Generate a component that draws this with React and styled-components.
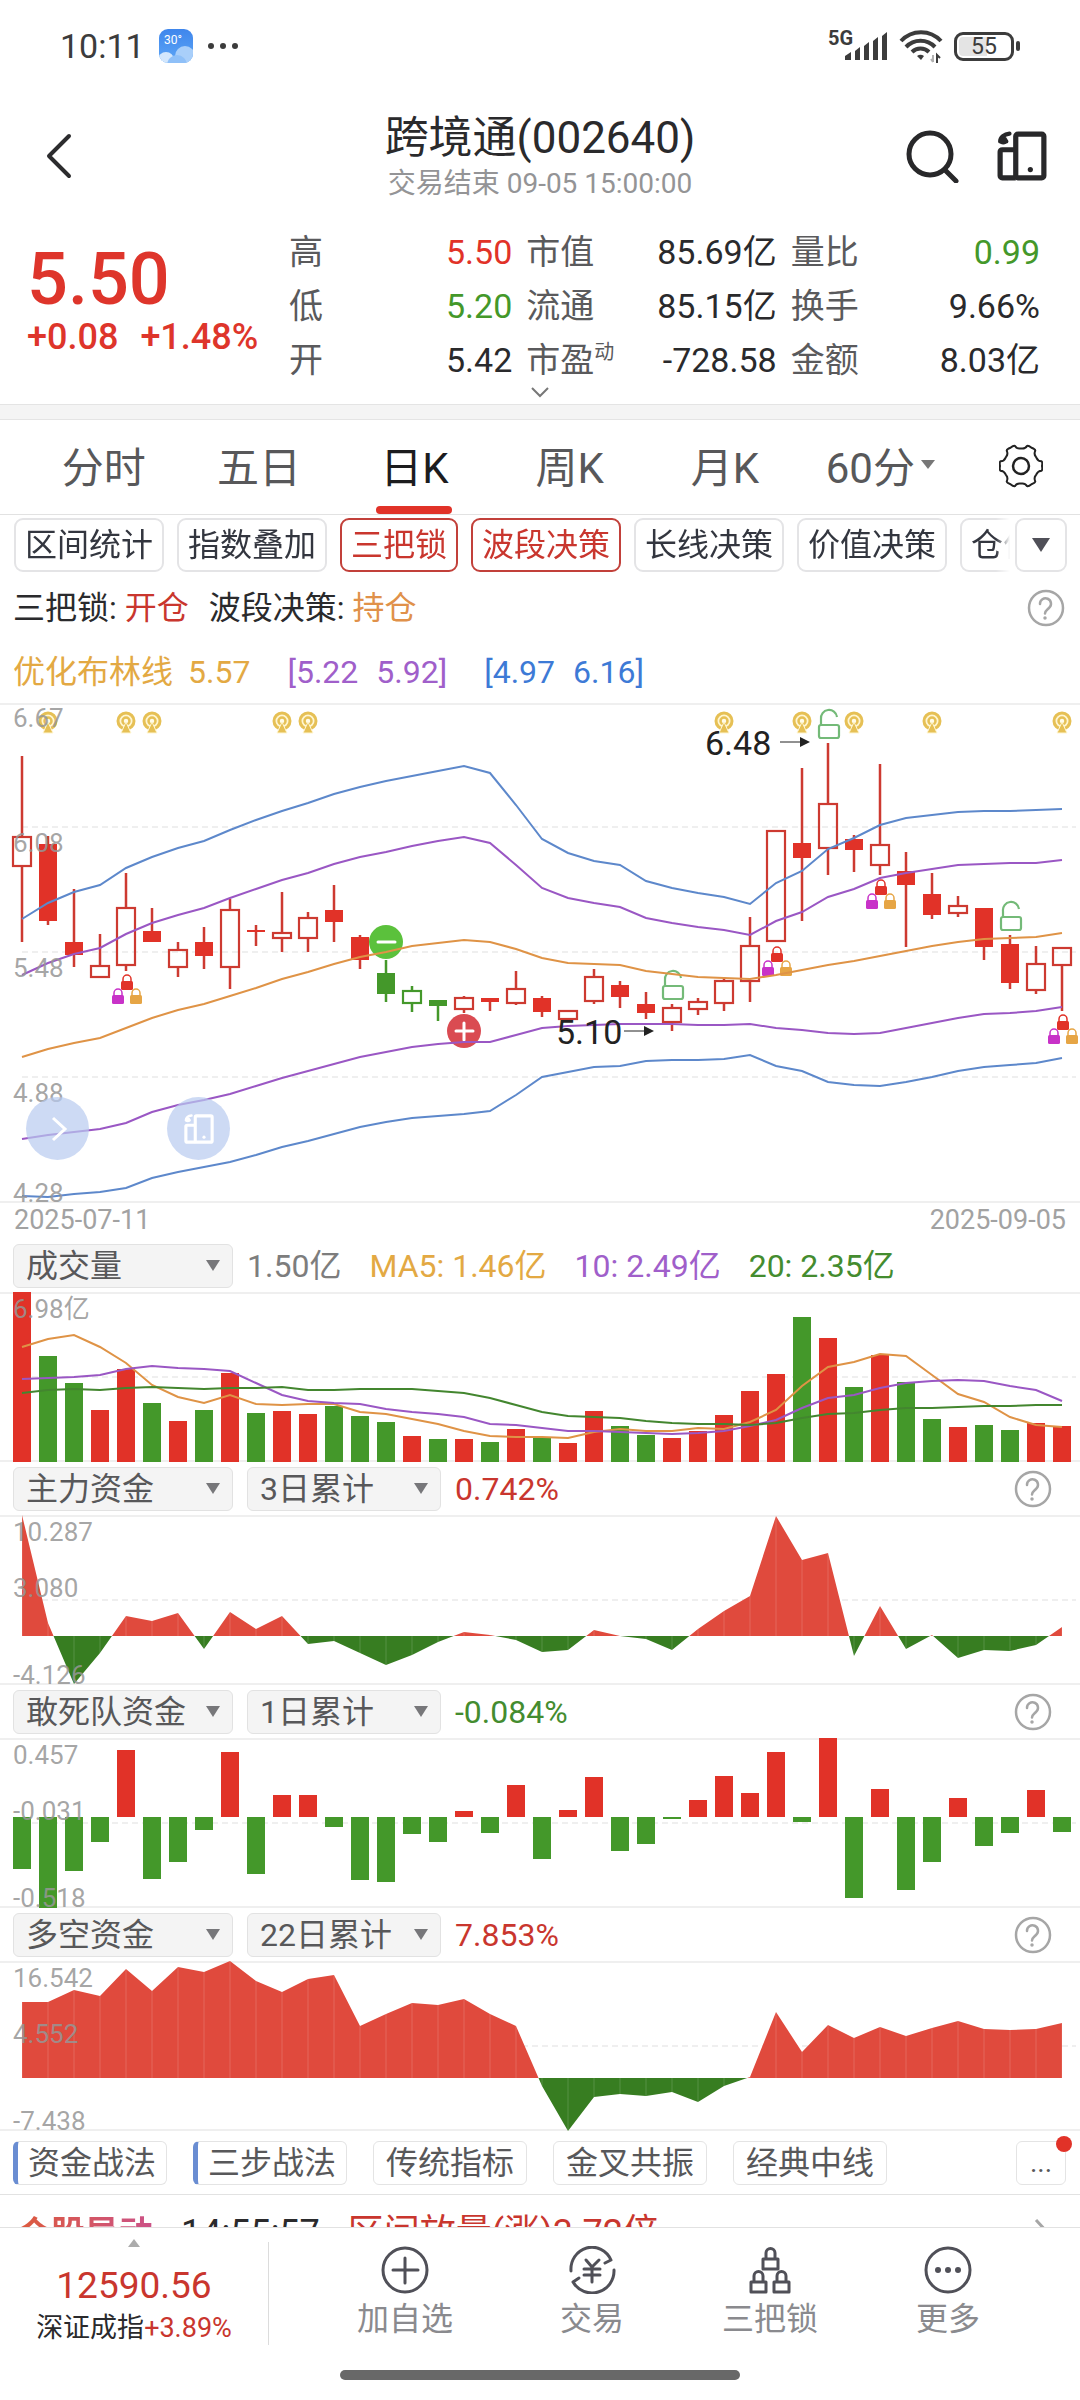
import React, { useState } from "react";
import styled, { createGlobalStyle } from "styled-components";

const RED = "#e13228";
const GREEN = "#44982a";
const BLUE_LINE = "#5d88cb";
const PURPLE_LINE = "#9a57c4";
const ORANGE_LINE = "#df9346";

const STEP = 26;
const px = (i) => 22 + i * STEP;

// [kind, high, top, bottom, low], f = filled body, h = hollow body, F / H = the same in green
const candles = [
  ["h", 53, 133, 164, 239], ["f", 133, 141, 218, 222], ["f", 186, 239, 252, 264], ["h", 231, 262, 275, 275],
  ["h", 170, 204, 263, 268], ["f", 205, 228, 239, 239], ["h", 239, 246, 265, 274], ["f", 224, 239, 253, 266],
  ["h", 196, 206, 265, 286], ["f", 222, 227, 229, 243], ["h", 189, 229, 236, 249], ["h", 209, 214, 236, 249],
  ["f", 182, 207, 219, 239], ["f", 232, 234, 257, 266], ["F", 257, 270, 291, 299], ["H", 283, 287, 301, 309],
  ["F", 297, 297, 303, 318], ["h", 293, 294, 307, 310], ["f", 295, 295, 299, 308], ["h", 268, 285, 301, 302],
  ["f", 293, 295, 309, 314], ["h", 307, 307, 317, 317], ["h", 266, 273, 299, 301], ["f", 278, 282, 294, 305],
  ["f", 289, 301, 310, 316], ["h", 301, 304, 320, 328], ["h", 295, 298, 307, 312], ["h", 274, 277, 301, 308],
  ["h", 214, 242, 279, 299], ["h", 127, 127, 239, 239], ["f", 65, 140, 155, 218], ["h", 40, 100, 146, 172],
  ["f", 132, 136, 147, 169], ["h", 61, 141, 163, 172], ["f", 149, 168, 182, 244], ["f", 170, 191, 212, 216],
  ["h", 193, 202, 211, 214], ["f", 205, 205, 244, 257], ["f", 232, 241, 280, 286], ["h", 243, 260, 288, 291],
  ["h", 244, 244, 263, 308],
];

const bands = [
  [BLUE_LINE, [216, 200, 189, 182, 165, 154, 145, 138, 127, 117, 108, 100, 91, 84, 78, 73, 68, 63, 70, 102, 136, 150, 158, 162, 178, 185, 190, 194, 201, 180, 168, 146, 135, 122, 115, 112, 109, 108, 108, 107, 106]],
  [PURPLE_LINE, [272, 260, 251, 245, 231, 220, 212, 205, 195, 186, 177, 170, 161, 154, 149, 143, 138, 134, 140, 162, 185, 195, 200, 204, 215, 220, 224, 227, 232, 218, 209, 194, 186, 175, 170, 166, 162, 161, 160, 160, 157]],
  [ORANGE_LINE, [354, 346, 340, 335, 325, 315, 307, 301, 293, 285, 276, 269, 261, 254, 249, 243, 240, 237, 239, 246, 255, 260, 261, 262, 268, 271, 274, 275, 276, 272, 267, 262, 258, 253, 248, 243, 239, 236, 235, 234, 230]],
  [PURPLE_LINE, [436, 432, 429, 426, 420, 409, 402, 397, 391, 383, 375, 368, 361, 354, 349, 344, 341, 339, 339, 332, 325, 323, 322, 321, 321, 321, 322, 322, 321, 325, 327, 330, 331, 330, 325, 320, 315, 311, 310, 308, 304]],
  [BLUE_LINE, [493, 494, 491, 489, 485, 475, 469, 464, 459, 452, 444, 438, 431, 424, 419, 415, 413, 411, 408, 392, 374, 369, 364, 363, 358, 357, 357, 356, 352, 363, 368, 379, 382, 383, 379, 374, 368, 364, 362, 360, 355]],
];

const volume = [170, 106, 79, 52, 93, 59, 41, 52, 89, 49, 51, 48, 56, 46, 40, 26, 23, 23, 20, 33, 24, 19, 51, 36, 27, 24, 31, 47, 71, 88, 145, 124, 75, 107, 80, 43, 35, 37, 32, 39, 36];
const volumeColor = "RGGRRGRGRGRRGGGRGRGRGRRGGRRRRRGRGRGGRGGRR";
const volumeLines = [
  [ORANGE_LINE, [55, 47, 43, 55, 71, 93, 105, 111, 103, 112, 113, 112, 112, 120, 122, 127, 132, 139, 144, 145, 145, 146, 140, 137, 139, 139, 136, 137, 130, 118, 94, 75, 70, 62, 64, 83, 102, 110, 125, 133, 135]],
  [PURPLE_LINE, [87, 86, 85, 83, 77, 74, 76, 77, 79, 91, 103, 109, 111, 112, 117, 120, 122, 125, 132, 133, 136, 139, 139, 140, 141, 142, 141, 139, 134, 128, 116, 106, 103, 96, 91, 89, 88, 89, 94, 98, 109]],
  ["#43862f", [101, 98, 97, 98, 96, 95, 96, 97, 96, 96, 95, 98, 98, 97, 97, 97, 99, 101, 106, 113, 120, 124, 125, 126, 129, 131, 132, 132, 133, 131, 126, 122, 121, 118, 116, 116, 115, 114, 114, 113, 113]],
];

const mainFund = [121, 13, -48, -17, 20, 15, 23, -13, 24, 7, 20, -8, -5, -17, -29, -19, -6, 4, 1, -4, -16, -14, 6, 0, -3, -14, 7, 25, 40, 120, 76, 83, -20, 30, -13, 1, -22, -14, -15, -9, 9];
const dareFund = [-52, -91, -54, -25, 67, -62, -45, -13, 65, -57, 22, 22, -10, -63, -65, -17, -25, 6, -16, 32, -42, 7, 40, -34, -27, -2, 17, 41, 24, 65, -5, 79, -81, 28, -73, -45, 19, -29, -16, 27, -15];
const bullBear = [76, 76, 88, 82, 109, 87, 111, 106, 117, 97, 86, 99, 103, 52, 64, 75, 73, 79, 64, 52, -8, -53, -19, -16, -18, -14, -24, -8, 1, 66, 26, 53, 40, 51, 42, 50, 57, 49, 48, 49, 55];

const toPoints = (values) => values.map((v, i) => `${px(i)},${v}`).join(" ");

function StatusBar() {
  return (
    <StatusRow>
      <StatusSide>
        <Clock>10:11</Clock>
        <svg width="34" height="34" viewBox="0 0 34 34">
          <defs>
            <linearGradient id="sky" x1="0" y1="0" x2="0" y2="1">
              <stop offset="0" stopColor="#3f86ec" />
              <stop offset="1" stopColor="#5da6f6" />
            </linearGradient>
            <clipPath id="tile">
              <rect width="34" height="34" rx="9" />
            </clipPath>
          </defs>
          <g clipPath="url(#tile)">
            <rect width="34" height="34" fill="url(#sky)" />
            <circle cx="26" cy="27" r="10" fill="#a9cffa" />
            <circle cx="7" cy="31" r="8" fill="#d3e7fd" />
            <circle cx="18" cy="36" r="10" fill="#8fc0f8" />
          </g>
          <text x="5" y="15" fontSize="12" fill="#fff">30°</text>
        </svg>
        <svg width="32" height="8" viewBox="0 0 32 8" fill="#3c3c3c">
          <circle cx="4" cy="4" r="3" />
          <circle cx="16" cy="4" r="3" />
          <circle cx="28" cy="4" r="3" />
        </svg>
      </StatusSide>
      <StatusSide $tight>
        <SignalIcon width="60" height="32" viewBox="-2 0 60 32" fill="#3c3c3c">
          <text x="-2" y="15" fontSize="20" fontWeight="700">5G</text>
          <path d="M15 26l6-4v8h-6zM25 21l5-4v13h-5zM34 16l5-4v18h-5zM43 11l5-4v23h-5zM52 6l5-4v28h-5z" />
        </SignalIcon>
        <svg width="44" height="34" viewBox="0 0 44 34" fill="none" stroke="#3c3c3c" strokeWidth="4">
          <path d="M2 12A27 27 0 0 1 42 12" />
          <path d="M7 18A20 20 0 0 1 36 18" />
          <path d="M13 23A12 12 0 0 1 30 23" />
          <path d="M18 27a6 6 0 0 1 7 0l-3 4z" fill="#3c3c3c" stroke="none" />
          <path d="M34 26v7M32 30l2 3" stroke="#b0b0b0" strokeWidth="2" />
          <path d="M38 34v-8l3 3" strokeWidth="2" />
        </svg>
        <Battery>
          <BatteryBody>55</BatteryBody>
          <BatteryNub />
        </Battery>
      </StatusSide>
    </StatusRow>
  );
}

function TransferIcon({ size, color, strokeWidth }) {
  return (
    <svg width={size} height={size} viewBox="0 0 48 48" fill="none" stroke={color} strokeWidth={strokeWidth} strokeLinejoin="round">
      <rect x="18" y="3" width="27" height="42" rx="2" />
      <path d="M18 18H5a2 2 0 0 0-2 2v23a2 2 0 0 0 2 2h13" />
      <path d="M12 2.5C7 3 3 6 3 10h6" strokeWidth={strokeWidth - 1} strokeLinecap="round" />
      <circle cx="6" cy="9" r="4" fill={color} stroke="none" />
      <circle cx="32" cy="37" r="2.5" fill={color} stroke="none" />
    </svg>
  );
}

function Header() {
  return (
    <HeaderBar>
      <BackButton aria-label="返回">
        <svg width="28" height="48" viewBox="0 0 28 48" fill="none" stroke="#2c2c2e" strokeWidth="4" strokeLinecap="round" strokeLinejoin="round">
          <path d="M24 4L4 24l20 20" />
        </svg>
      </BackButton>
      <TitleBlock>
        <Title>跨境通(002640)</Title>
        <SubTitle>交易结束 09-05 15:00:00</SubTitle>
      </TitleBlock>
      <HeaderActions>
        <IconButton aria-label="搜索">
          <svg width="54" height="54" viewBox="0 0 54 54" fill="none" stroke="#28282a" strokeWidth="5" strokeLinecap="round">
            <circle cx="24" cy="25" r="21" />
            <path d="M39 41l11 11" />
          </svg>
        </IconButton>
        <IconButton aria-label="切换">
          <TransferIcon size={50} color="#28282a" strokeWidth={5} />
        </IconButton>
      </HeaderActions>
    </HeaderBar>
  );
}

const stats = [
  ["高", "5.50", RED],
  ["市值", "85.69亿"],
  ["量比", "0.99", GREEN],
  ["低", "5.20", GREEN],
  ["流通", "85.15亿"],
  ["换手", "9.66%"],
  ["开", "5.42"],
  ["市盈", "-728.58", null, "动"],
  ["金额", "8.03亿"],
];

function Quote() {
  return (
    <>
      <QuoteRow>
        <PriceBlock>
          <Price>5.50</Price>
          <Change>
            <span>+0.08</span>
            <span>+1.48%</span>
          </Change>
        </PriceBlock>
        <StatGrid>
          {stats.map(([label, value, color, sup]) => (
            <Stat key={label}>
              <StatLabel>
                {label}
                {sup && <Sup>{sup}</Sup>}
              </StatLabel>
              <StatValue $color={color}>{value}</StatValue>
            </Stat>
          ))}
        </StatGrid>
      </QuoteRow>
      <ExpandButton aria-label="展开">
        <svg width="18" height="11" viewBox="0 0 18 11" fill="none" stroke="#777" strokeWidth="2">
          <path d="M1 1l8 8 8-8" />
        </svg>
      </ExpandButton>
    </>
  );
}

const gear = (() => {
  const at = (r, deg) => {
    const a = (deg * Math.PI) / 180;
    return `${(22 + r * Math.cos(a)).toFixed(1)} ${(22 + r * Math.sin(a)).toFixed(1)}`;
  };
  let d = `M${at(21, -13)}`;
  for (let t = 0; t < 360; t += 60) {
    d += `Q${at(22, t - 10)} ${at(21, t)}`;
    d += `Q${at(22, t + 10)} ${at(21, t + 13)}`;
    d += `C${at(17, t + 17)} ${at(17.5, t + 24)} ${at(17.5, t + 30)}`;
    d += `C${at(17.5, t + 36)} ${at(17, t + 43)} ${at(21, t + 47)}`;
  }
  return d + "Z";
})();

function Tabs() {
  const [active, setActive] = useState("日K");
  return (
    <TabRow role="tablist">
      {["分时", "五日", "日K", "周K", "月K", "60分"].map((name) => (
        <Tab key={name} role="tab" aria-selected={active === name} $active={active === name} onClick={() => setActive(name)}>
          {name}
          {name === "60分" && <Caret $size={7} />}
        </Tab>
      ))}
      <GearButton aria-label="设置">
        <svg width="44" height="44" viewBox="0 0 44 44" fill="none" stroke="#222" strokeWidth="2" strokeLinejoin="round">
          <path d={gear} />
          <circle cx="22" cy="22" r="8" strokeWidth="2.5" />
        </svg>
      </GearButton>
    </TabRow>
  );
}

function Help() {
  return (
    <IconButton aria-label="帮助">
      <svg width="38" height="38" viewBox="0 0 38 38" fill="none" stroke="#a6a6a6" strokeWidth="2.5" strokeLinecap="round">
        <circle cx="19" cy="19" r="17" />
        <path d="M13 15a5.5 5.5 0 1 1 9 4c-2 2-4 3-4 5.5" />
        <circle cx="18" cy="29" r="1" fill="#a6a6a6" strokeWidth="1.5" />
      </svg>
    </IconButton>
  );
}

function Tools() {
  return (
    <ToolRow>
      <ToolScroll>
        <Chip>区间统计</Chip>
        <Chip>指数叠加</Chip>
        <Chip $on>三把锁</Chip>
        <Chip $on>波段决策</Chip>
        <Chip>长线决策</Chip>
        <Chip>价值决策</Chip>
        <Chip>仓位管理</Chip>
      </ToolScroll>
      <MoreTools aria-label="更多指标">
        <Caret $size={9} $dark />
      </MoreTools>
    </ToolRow>
  );
}

function Grid({ lines, bottom }) {
  return (
    <g stroke="#efefef" strokeWidth="2">
      {lines.map((y) => (
        <path key={y} d={`M22 ${y}H1076`} strokeDasharray="6 4" />
      ))}
      <path d={`M0 1H1080M0 ${bottom - 1}H1080`} />
    </g>
  );
}

function AxisLabels({ items }) {
  return items.map(([y, label]) => (
    <text key={y} x="13" y={y} fontSize="26" fill="rgba(150,150,150,0.86)">
      {label}
    </text>
  ));
}

function Lock({ x, y, color }) {
  return (
    <g transform={`translate(${x} ${y})`}>
      <path d="M-4 9V5a4 4 0 0 1 8 0v4" fill="none" stroke={color} strokeWidth="1.5" />
      <rect x="-6" y="7" width="12" height="9" rx="1.5" fill={color} />
    </g>
  );
}

function TripleLock({ i, y }) {
  return (
    <>
      <Lock x={px(i) + 1} y={y} color={RED} />
      <Lock x={px(i) - 8} y={y + 14} color="#c832c8" />
      <Lock x={px(i) + 10} y={y + 14} color="#e6a545" />
    </>
  );
}

function OpenLock({ i, y }) {
  return (
    <g transform={`translate(${px(i)} ${y})`} fill="none" stroke="#74ba78" strokeWidth="2.2">
      <rect x="-9" y="15" width="20" height="13" rx="2" />
      <path d="M-7 15V9a8 8 0 0 1 16-2" />
    </g>
  );
}

function Beacon({ i }) {
  return (
    <g transform={`translate(${px(i)} 18)`}>
      <circle r="8" fill="#fff6d2" stroke="#e6c055" strokeWidth="3" />
      <circle r="3.5" fill="#fffbe8" stroke="#e6c055" strokeWidth="2.5" />
      <path d="M0 1l5 11h-10z" fill="#e6c055" stroke="#fff6d2" />
    </g>
  );
}

function Arrow({ x, y }) {
  return (
    <g transform={`translate(${x} ${y})`}>
      <path d="M0 0H22" stroke="#222" />
      <path d="M20-5l10 5-10 5z" fill="#222" />
    </g>
  );
}

function Candle({ i, data: [kind, high, top, bottom, low] }) {
  const color = kind === "F" || kind === "H" ? GREEN : "#cd3a31";
  const hollow = kind.toLowerCase() === "h";
  return (
    <>
      <path d={`M${px(i)} ${high}V${top}M${px(i)} ${bottom}V${low}`} stroke={color} strokeWidth="2.5" />
      {hollow ? (
        <rect x={px(i) - 9} y={top + 1} width="18" height={bottom - top - 2} fill="none" stroke={color} strokeWidth="2.2" />
      ) : (
        <rect x={px(i) - 9} y={top} width="18" height={bottom - top} fill={kind === "F" ? GREEN : RED} />
      )}
    </>
  );
}

function PriceChart() {
  return (
    <ChartFrame>
      <Plot viewBox="0 0 1080 500" role="img" aria-label="日K线">
        <Grid lines={[124, 249, 374]} bottom={500} />
        {candles.map((c, i) => (
          <Candle key={i} i={i} data={c} />
        ))}
        <circle cx={px(14)} cy="239" r="17" fill="#5bc13c" />
        <path d={`M${px(14) - 8} 239h17`} stroke="#fff" strokeWidth="3" strokeLinecap="round" />
        <circle cx={px(17)} cy="328" r="17" fill="#da4b52" />
        <path d={`M${px(17) - 8} 328h17M${px(17)} 320v17`} stroke="#fff" strokeWidth="3" strokeLinecap="round" />
        {[1, 4, 5, 10, 11, 27, 30, 32, 35, 40].map((i) => (
          <Beacon key={i} i={i} />
        ))}
        <TripleLock i={4} y={271} />
        <TripleLock i={29} y={243} />
        <TripleLock i={33} y={176} />
        <TripleLock i={40} y={311} />
        <OpenLock i={31} y={7} />
        <OpenLock i={25} y={268} />
        <OpenLock i={38} y={199} />
        {bands.map(([color, values], i) => (
          <polyline key={i} points={toPoints(values)} fill="none" stroke={color} strokeWidth="2" />
        ))}
        <AxisLabels items={[[24, "6.67"], [149, "6.08"], [274, "5.48"], [399, "4.88"], [499, "4.28"]]} />
        <text x="705" y="52" fontSize="34" fill="#222">6.48</text>
        <Arrow x={780} y={39} />
        <text x="556" y="341" fontSize="34" fill="#222">5.10</text>
        <Arrow x={624} y={328} />
      </Plot>
      <FloatButton $left={26} aria-label="展开工具">
        <svg width="30" height="30" viewBox="0 0 30 30" fill="none" stroke="#fff" strokeWidth="3">
          <path d="M10 4l12 11-12 11" />
        </svg>
      </FloatButton>
      <FloatButton $left={167} aria-label="切换账户">
        <TransferIcon size={30} color="#fff" strokeWidth={5} />
      </FloatButton>
    </ChartFrame>
  );
}

function VolumeChart() {
  return (
    <Plot viewBox="0 0 1080 170" role="img" aria-label="成交量">
      <Grid lines={[85]} bottom={170} />
      {volume.map((h, i) => (
        <rect key={i} x={px(i) - 9} y={170 - h} width="18" height={h} fill={volumeColor[i] === "R" ? RED : GREEN} />
      ))}
      {volumeLines.map(([color, values]) => (
        <polyline key={color} points={toPoints(values)} fill="none" stroke={color} strokeWidth="2" />
      ))}
      <AxisLabels items={[[26, "6.98亿"]]} />
    </Plot>
  );
}

function BarChart({ values, zero, labels, name }) {
  return (
    <Plot viewBox="0 0 1080 170" role="img" aria-label={name}>
      <Grid lines={[85]} bottom={170} />
      {values.map((v, i) => (
        <rect key={i} x={px(i) - 9} y={v > 0 ? zero - v : zero} width="18" height={Math.abs(v)} fill={v > 0 ? RED : GREEN} />
      ))}
      <AxisLabels items={labels} />
    </Plot>
  );
}

function AreaChart({ id, values, zero, labels, name }) {
  const area = `${px(0)},${zero} ${toPoints(values.map((v) => zero - v))} ${px(40)},${zero}`;
  return (
    <Plot viewBox="0 0 1080 170" role="img" aria-label={name}>
      <defs>
        <clipPath id={`${id}-up`}>
          <rect width="1080" height={zero} />
        </clipPath>
        <clipPath id={`${id}-down`}>
          <rect y={zero} width="1080" height={170 - zero} />
        </clipPath>
      </defs>
      <Grid lines={[85]} bottom={170} />
      <polygon points={area} fill="#e04a3d" clipPath={`url(#${id}-up)`} />
      <polygon points={area} fill="#377d21" clipPath={`url(#${id}-down)`} />
      {values.map((v, i) => (
        <path key={i} d={`M${px(i)} ${zero}V${zero - v}`} stroke="rgba(255,255,255,0.16)" />
      ))}
      <AxisLabels items={labels} />
    </Plot>
  );
}

function Picker({ value, label, narrow }) {
  return (
    <PickerBox $narrow={narrow}>
      <PickerSelect aria-label={label} defaultValue={value}>
        <option>{value}</option>
      </PickerSelect>
      <PickerCaret />
    </PickerBox>
  );
}

function FundHeader({ name, period, value, color }) {
  return (
    <PanelHeader>
      <Picker value={name} label="指标" />
      <Picker value={period} label="周期" narrow />
      <Text $color={color}>{value}</Text>
      <Spacer />
      <Help />
    </PanelHeader>
  );
}

function TabBar() {
  return (
    <BottomBar>
      <IndexLink href="#index">
        <UpMark />
        <IndexValue>12590.56</IndexValue>
        <IndexName>
          深证成指<em>+3.89%</em>
        </IndexName>
      </IndexLink>
      <NavItems>
        <NavButton>
          <svg width="48" height="48" viewBox="0 0 48 48" fill="none" stroke="#505058" strokeWidth="3" strokeLinecap="round">
            <circle cx="24" cy="24" r="22" />
            <path d="M24 12v25M12 24h25" />
          </svg>
          加自选
        </NavButton>
        <NavButton>
          <svg width="48" height="48" viewBox="0 0 48 48" fill="none" stroke="#505058" strokeWidth="3" strokeLinecap="round" strokeLinejoin="round">
            <path d="M3 25A21 22 0 0 1 43 14l-6 3" />
            <path d="M46 24A22 22 0 0 1 5 36l6-4" />
            <path d="M18 14l6 7 7-7M24 21v15M16 23h16M16 29h16" />
          </svg>
          交易
        </NavButton>
        <NavButton>
          <svg width="48" height="48" viewBox="0 0 48 48" fill="none" stroke="#505058" strokeWidth="3" strokeLinejoin="round">
            <path d="M17 13h15v10H17zM20 13V7a4 4 0 0 1 9 0v6" />
            <path d="M5 36h15v10H5zM8 36v-6a4 4 0 0 1 9 0v6" />
            <path d="M28 36h15v10H28zM31 36v-6a4 4 0 0 1 9 0v6" />
          </svg>
          三把锁
        </NavButton>
        <NavButton>
          <svg width="48" height="48" viewBox="0 0 48 48" fill="none" stroke="#505058" strokeWidth="3">
            <circle cx="24" cy="24" r="22" />
            <g fill="#505058" stroke="none">
              <circle cx="14" cy="24" r="3" />
              <circle cx="24" cy="24" r="3" />
              <circle cx="34" cy="24" r="3" />
            </g>
          </svg>
          更多
        </NavButton>
      </NavItems>
    </BottomBar>
  );
}

export default function App() {
  return (
    <Page>
      <GlobalStyle />
      <StatusBar />
      <Header />
      <Quote />
      <Band />
      <Tabs />
      <Tools />
      <SignalRow>
        <Text>
          三把锁: <Tint $color="#c9362e">开仓</Tint>
        </Text>
        <Text>
          波段决策: <Tint $color="#e0914a">持仓</Tint>
        </Text>
        <Spacer />
        <Help />
      </SignalRow>
      <BollRow>
        <Text $color="#e3a943">优化布林线</Text>
        <Text $color="#e3a943">5.57</Text>
        <Pair $color="#a05fca">
          <span>[5.22</span>
          <span>5.92]</span>
        </Pair>
        <Pair $color="#3d7ad6">
          <span>[4.97</span>
          <span>6.16]</span>
        </Pair>
      </BollRow>
      <PriceChart />
      <DateRow>
        <span>2025-07-11</span>
        <span>2025-09-05</span>
      </DateRow>
      <PanelHeader>
        <Picker value="成交量" label="指标" />
        <VolumeLegend>
          <Text $color="#7d7d7d">1.50亿</Text>
          <Text $color="#e3a943">MA5: 1.46亿</Text>
          <Text $color="#a05fca">10: 2.49亿</Text>
          <Text $color="#448c2f">20: 2.35亿</Text>
        </VolumeLegend>
      </PanelHeader>
      <VolumeChart />
      <FundHeader name="主力资金" period="3日累计" value="0.742%" color="#c9362e" />
      <AreaChart id="main" name="主力资金" values={mainFund} zero={121} labels={[[26, "10.287"], [82, "3.080"], [169, "-4.126"]]} />
      <FundHeader name="敢死队资金" period="1日累计" value="-0.084%" color="#448c2f" />
      <BarChart name="敢死队资金" values={dareFund} zero={79} labels={[[26, "0.457"], [82, "-0.031"], [169, "-0.518"]]} />
      <FundHeader name="多空资金" period="22日累计" value="7.853%" color="#c9362e" />
      <AreaChart id="bull" name="多空资金" values={bullBear} zero={117} labels={[[26, "16.542"], [82, "4.552"], [169, "-7.438"]]} />
      <StrategyRow>
        <Strategy $marked>资金战法</Strategy>
        <Strategy $marked>三步战法</Strategy>
        <Strategy>传统指标</Strategy>
        <Strategy>金叉共振</Strategy>
        <Strategy>经典中线</Strategy>
        <Spacer />
        <Strategy $small>
          ...
          <Dot />
        </Strategy>
      </StrategyRow>
      <Ticker href="#alerts">
        <TickerTag>个股异动</TickerTag>
        <span>14:55:57</span>
        <Tint $color="#c9362e">区间放量(涨)3.72倍</Tint>
        <Spacer />
        <svg width="16" height="36" viewBox="0 0 16 36" fill="none" stroke="#a6a6a6" strokeWidth="3">
          <path d="M2 5l12 13L2 31" />
        </svg>
      </Ticker>
      <TabBar />
      <HomeBar />
    </Page>
  );
}

const GlobalStyle = createGlobalStyle`
  * {
    box-sizing: border-box;
  }

  body {
    margin: 0;
    background: #fff;
  }

  body, button, select {
    font-family: Roboto, "Noto Sans CJK SC", sans-serif;
    color: #2a2a2c;
  }

  button {
    padding: 0;
    border: 0;
    background: none;
    cursor: pointer;
  }

  a {
    color: inherit;
    text-decoration: none;
  }
`;

const Page = styled.main`
  width: 100%;
  overflow: hidden;
  background: #fff;
`;

const Spacer = styled.div`
  flex: 1;
`;

const StatusRow = styled.div`
  display: flex;
  justify-content: space-between;
  align-items: center;
  height: 92px;
  padding: 0 60px;
`;

const StatusSide = styled.div`
  display: flex;
  align-items: center;
  gap: ${(p) => (p.$tight ? 11 : 14)}px;
`;

const Clock = styled.span`
  font-size: 34px;
  line-height: 40px;
  color: #3c3c3c;
`;

const SignalIcon = styled.svg`
  overflow: visible;
`;

const Battery = styled.div`
  display: flex;
  align-items: center;
  gap: 2px;
`;

const BatteryBody = styled.span`
  width: 60px;
  height: 29px;
  border: 3px solid #3c3c3c;
  border-radius: 9px;
  box-shadow: inset 0 0 0 2px #fff;
  background: linear-gradient(to right, #e4e4e4 55%, #fff 55%);
  font-size: 23px;
  line-height: 24px;
  text-align: center;
  color: #3c3c3c;
`;

const BatteryNub = styled.span`
  width: 4px;
  height: 10px;
  border-radius: 2px;
  background: #3c3c3c;
`;

const HeaderBar = styled.header`
  display: grid;
  grid-template-columns: 1fr auto 1fr;
  align-items: center;
  padding: 20px 33px 25px;
`;

const IconButton = styled.button`
  display: flex;
  flex: none;
`;

const BackButton = styled(IconButton)`
  padding-left: 12px;
`;

const TitleBlock = styled.div`
  display: flex;
  flex-direction: column;
  align-items: center;
  gap: 4px;
`;

const Title = styled.h1`
  margin: 0;
  font-size: 44px;
  line-height: 52px;
  font-weight: 400;
`;

const SubTitle = styled.span`
  font-size: 28px;
  line-height: 32px;
  color: #949496;
`;

const HeaderActions = styled.div`
  display: flex;
  justify-content: flex-end;
  align-items: center;
  gap: 37px;
`;

const QuoteRow = styled.section`
  display: flex;
  padding: 0 40px 0 27px;
`;

const PriceBlock = styled.div`
  flex: none;
  width: 262px;
  padding-top: 20px;
  color: #de352b;
  font-weight: 500;
`;

const Price = styled.div`
  font-size: 72px;
  line-height: 70px;
`;

const Change = styled.div`
  display: flex;
  gap: 22px;
  font-size: 36px;
  line-height: 44px;
`;

const StatGrid = styled.div`
  flex: 1;
  display: grid;
  grid-template-columns: 223fr 250fr 249fr;
  column-gap: 14px;
`;

const Stat = styled.div`
  display: flex;
  justify-content: space-between;
  font-size: 34px;
  line-height: 54px;
`;

const StatLabel = styled.span`
  display: flex;
  color: #5a5a5c;
`;

const Sup = styled.sup`
  font-size: 20px;
  line-height: 38px;
  vertical-align: top;
`;

const StatValue = styled.span`
  color: ${(p) => p.$color || "#2a2a2c"};
`;

const ExpandButton = styled.button`
  display: flex;
  align-items: flex-start;
  height: 17px;
  margin: 0 auto;
`;

const Band = styled.div`
  height: 16px;
  border: solid #e4e4e4;
  border-width: 1px 0;
  background: #f4f4f4;
`;

const TabRow = styled.div`
  display: grid;
  grid-template-columns: repeat(6, 1fr) 122px;
  height: 95px;
  padding-left: 26px;
  border-bottom: 1px solid #e2e2e2;
`;

const Tab = styled.button`
  position: relative;
  display: flex;
  align-items: center;
  justify-content: center;
  gap: 6px;
  padding-bottom: 5px;
  font-size: 42px;
  color: ${(p) => (p.$active ? "#1c1c1e" : "#58585a")};

  &::after {
    content: "";
    display: ${(p) => (p.$active ? "block" : "none")};
    position: absolute;
    bottom: 0;
    left: 50%;
    width: 76px;
    height: 8px;
    margin-left: -38px;
    border-radius: 4px;
    background: ${RED};
  }
`;

const Caret = styled.i`
  border: ${(p) => p.$size}px solid transparent;
  border-top: ${(p) => p.$size + (p.$dark ? 5 : 2)}px solid ${(p) => (p.$dark ? "#505058" : "#777")};
  border-bottom: 0;
`;

const GearButton = styled(IconButton)`
  align-items: center;
  justify-content: center;
  padding: 0 0 2px 4px;
`;

const ToolRow = styled.div`
  display: flex;
  gap: 5px;
  height: 61px;
  padding: 3px 13px 4px 14px;
`;

const ToolScroll = styled.div`
  flex: 1;
  display: flex;
  gap: 13px;
  overflow: hidden;
  mask-image: linear-gradient(to right, #000 calc(100% - 14px), transparent);
`;

const Chip = styled.button`
  flex: none;
  height: 54px;
  padding: 0 9px;
  border: ${(p) => (p.$on ? "2px solid #c2403a" : "2px solid #e4e4e6")};
  border-radius: 9px;
  font-size: 32px;
  line-height: 48px;
  color: ${(p) => (p.$on ? "#c9362e" : "#33363f")};
`;

const MoreTools = styled.button`
  display: flex;
  align-items: center;
  justify-content: center;
  width: 52px;
  height: 54px;
  border: 2px solid #e4e4e6;
  border-radius: 9px;
`;

const Text = styled.span`
  font-size: 32px;
  line-height: 44px;
  white-space: pre;
  color: ${(p) => p.$color || "#2a2a2c"};
`;

const Tint = styled.span`
  color: ${(p) => p.$color};
`;

const SignalRow = styled.div`
  display: flex;
  align-items: center;
  gap: 20px;
  height: 64px;
  padding: 0 15px 0 13px;
`;

const BollRow = styled.div`
  display: flex;
  align-items: center;
  gap: 15px;
  height: 63px;
  padding-left: 13px;
`;

const Pair = styled(Text)`
  display: flex;
  gap: 18px;
  margin-left: 22px;
`;

const ChartFrame = styled.div`
  position: relative;
`;

const Plot = styled.svg`
  display: block;
  width: 100%;
  height: auto;
  overflow: visible;
`;

const FloatButton = styled.button`
  position: absolute;
  left: ${(p) => p.$left}px;
  bottom: 43px;
  display: flex;
  align-items: center;
  justify-content: center;
  width: 63px;
  height: 63px;
  border-radius: 50%;
  background: rgba(184, 203, 240, 0.7);
`;

const DateRow = styled.div`
  display: flex;
  justify-content: space-between;
  height: 36px;
  padding: 0 14px;
  font-size: 27px;
  line-height: 34px;
  color: #a2a2a2;
`;

const PanelHeader = styled.div`
  display: flex;
  align-items: center;
  gap: 14px;
  height: 53px;
  padding: 0 28px 0 13px;
`;

const VolumeLegend = styled.div`
  display: flex;
  gap: 28px;
`;

const PickerBox = styled.div`
  position: relative;
  flex: none;
  width: ${(p) => (p.$narrow ? 194 : 220)}px;
`;

const PickerSelect = styled.select`
  display: block;
  appearance: none;
  width: 100%;
  height: 44px;
  padding: 0 12px;
  border: 1px solid #e2e2e2;
  border-radius: 6px;
  background: #f4f4f4;
  font-size: 32px;
  color: #58585a;
`;

const PickerCaret = styled.i`
  position: absolute;
  right: 13px;
  top: 16px;
  border: 7px solid transparent;
  border-top: 11px solid #77777a;
  border-bottom: 0;
  pointer-events: none;
`;

const StrategyRow = styled.div`
  display: flex;
  align-items: center;
  gap: 26px;
  height: 64px;
  padding: 0 14px 0 13px;
  border-bottom: 1px solid #e2e2e2;
`;

const Strategy = styled.button`
  position: relative;
  flex: none;
  width: ${(p) => (p.$small ? 50 : 154)}px;
  height: 44px;
  border: 1px solid #e4e4e4;
  border-left: ${(p) => (p.$marked ? "5px solid #6a8dd2" : "1px solid #e4e4e4")};
  border-radius: 6px;
  font-size: ${(p) => (p.$small ? 28 : 32)}px;
  line-height: 40px;
  color: #58585a;
`;

const Dot = styled.i`
  position: absolute;
  top: -6px;
  right: -7px;
  width: 16px;
  height: 16px;
  border-radius: 50%;
  background: ${RED};
`;

const Ticker = styled.a`
  display: flex;
  gap: 28px;
  height: 32px;
  padding: 20px 30px 0 17px;
  overflow: hidden;
  font-size: 36px;
  line-height: 36px;
  white-space: nowrap;
`;

const TickerTag = styled.b`
  font-size: 34px;
  background: linear-gradient(to right, #dd5a3c, #cb5288);
  background-clip: text;
  color: transparent;
`;

const BottomBar = styled.nav`
  display: flex;
  border-top: 1px solid #e2e2e2;
`;

const IndexLink = styled.a`
  position: relative;
  display: flex;
  flex-direction: column;
  align-items: center;
  width: 269px;
  height: 103px;
  margin-top: 14px;
  padding-top: 20px;
  border-right: 1px solid #dcdcdc;
`;

const UpMark = styled.i`
  position: absolute;
  top: -3px;
  border: 6px solid transparent;
  border-bottom: 8px solid #acacac;
  border-top: 0;
`;

const IndexValue = styled.span`
  font-size: 37px;
  line-height: 48px;
  color: #c9362e;
`;

const IndexName = styled.span`
  font-size: 27px;
  line-height: 36px;

  em {
    font-style: normal;
    color: #c9362e;
  }
`;

const NavItems = styled.div`
  flex: 1;
  display: grid;
  grid-template-columns: 196fr 178fr 178fr 178fr;
  padding: 18px 43px 0 38px;
`;

const NavButton = styled.button`
  display: flex;
  flex-direction: column;
  align-items: center;
  justify-self: center;
  height: 100px;
  font-size: 32px;
  line-height: 50px;
  color: #8a8a8e;
`;

const HomeBar = styled.div`
  width: 37%;
  height: 10px;
  margin: 24px auto 20px;
  border-radius: 5px;
  background: #686868;
`;
